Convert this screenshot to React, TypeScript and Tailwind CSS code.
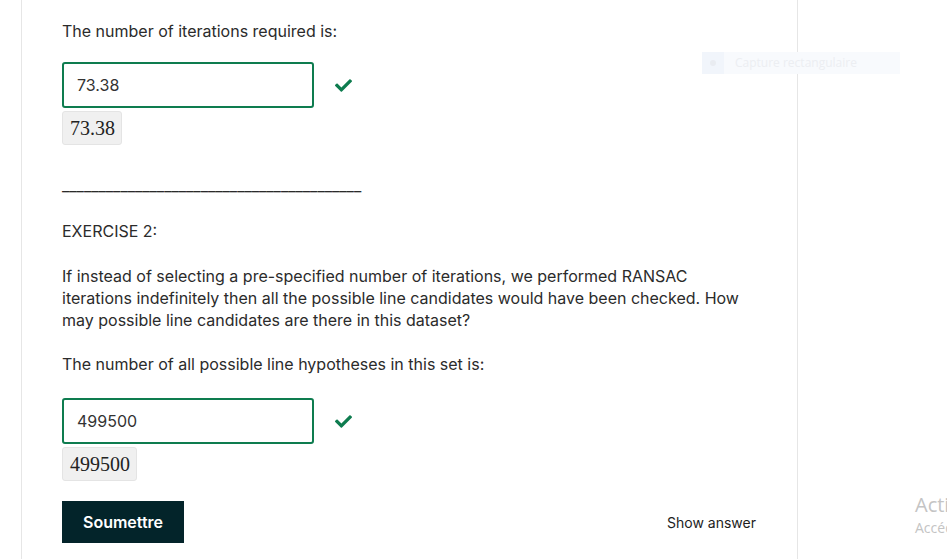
import React from "react";
import { FaCheck } from "react-icons/fa";

function AnswerInput({ value }: { value: string }) {
  return (
    <div className="flex items-center">
      <div className="w-[252px] h-[46px] border-2 border-[#0e7c4f] rounded-[3px] flex items-center pl-[13px] text-[16px] text-[#333333]">
        {value}
      </div>
      <FaCheck className="ml-[21px] text-[#0e7c4f] w-[17px] h-[17px]" />
    </div>
  );
}

function MathBox({ value }: { value: string }) {
  return (
    <div className="mt-[3px] self-start h-[34px] flex items-center pl-[7px] pr-[6px] bg-[#f0f0f0] border border-[#e4e4e4] rounded-[3px] text-[20px] text-[#222] [font-family:'Liberation_Serif',serif]">
      {value}
    </div>
  );
}

export default function App() {
  return (
    <div className="relative w-[947px] h-[559px] overflow-hidden bg-white flex [font-family:Inter,sans-serif] text-[#2b2b2b]">
      <div className="w-[21px] shrink-0" />
      <div className="w-[777px] shrink-0 border-l border-r border-[#e6e6e6] px-10 pt-[20px] flex flex-col">
        <p className="text-[16px] leading-[22px]">The number of iterations required is:</p>
        <div className="mt-[20px]">
          <AnswerInput value="73.38" />
        </div>
        <MathBox value="73.38" />
        <p className="mt-[29px] text-[16px] leading-[22px]">
          _________________________________________
        </p>
        <p className="mt-[24px] text-[16px] leading-[22px]">EXERCISE 2:</p>
        <p className="mt-[23px] text-[16px] leading-[22px] max-w-[688px]">
          If instead of selecting a pre-specified number of iterations, we performed RANSAC iterations
          indefinitely then all the possible line candidates would have been checked. How may possible
          line candidates are there in this dataset?
        </p>
        <p className="mt-[22px] text-[16px] leading-[22px]">
          The number of all possible line hypotheses in this set is:
        </p>
        <div className="mt-[23px]">
          <AnswerInput value="499500" />
        </div>
        <MathBox value="499500" />
        <div className="mt-[20px] flex items-center justify-between">
          <button className="h-[42px] px-[21px] bg-[#03242a] text-white font-semibold text-[16px]">
            Soumettre
          </button>
          <span className="text-[14px] text-[#1d1d1d] mr-px">Show answer</span>
        </div>
      </div>
      <div className="absolute left-[702px] top-[52px] w-[198px] h-[22px] flex items-center bg-[#f8fafd]">
        <div className="w-[22px] h-[22px] bg-[#f1f5fb] flex items-center justify-center">
          <div className="w-[6px] h-[6px] rounded-full bg-[#e9ecf1]" />
        </div>
        <span className="ml-[11px] text-[12px] text-[#eceef2] [font-family:'Open_Sans',sans-serif]">
          Capture rectangulaire
        </span>
      </div>
      <div className="absolute left-[915px] top-[495px] flex flex-col whitespace-nowrap text-[#c4c4c4] [font-family:'Open_Sans',sans-serif] leading-none">
        <span className="text-[20px]">Activer Windows</span>
        <span className="text-[14px] mt-[6px]">Accédez aux paramètres</span>
      </div>
    </div>
  );
}
